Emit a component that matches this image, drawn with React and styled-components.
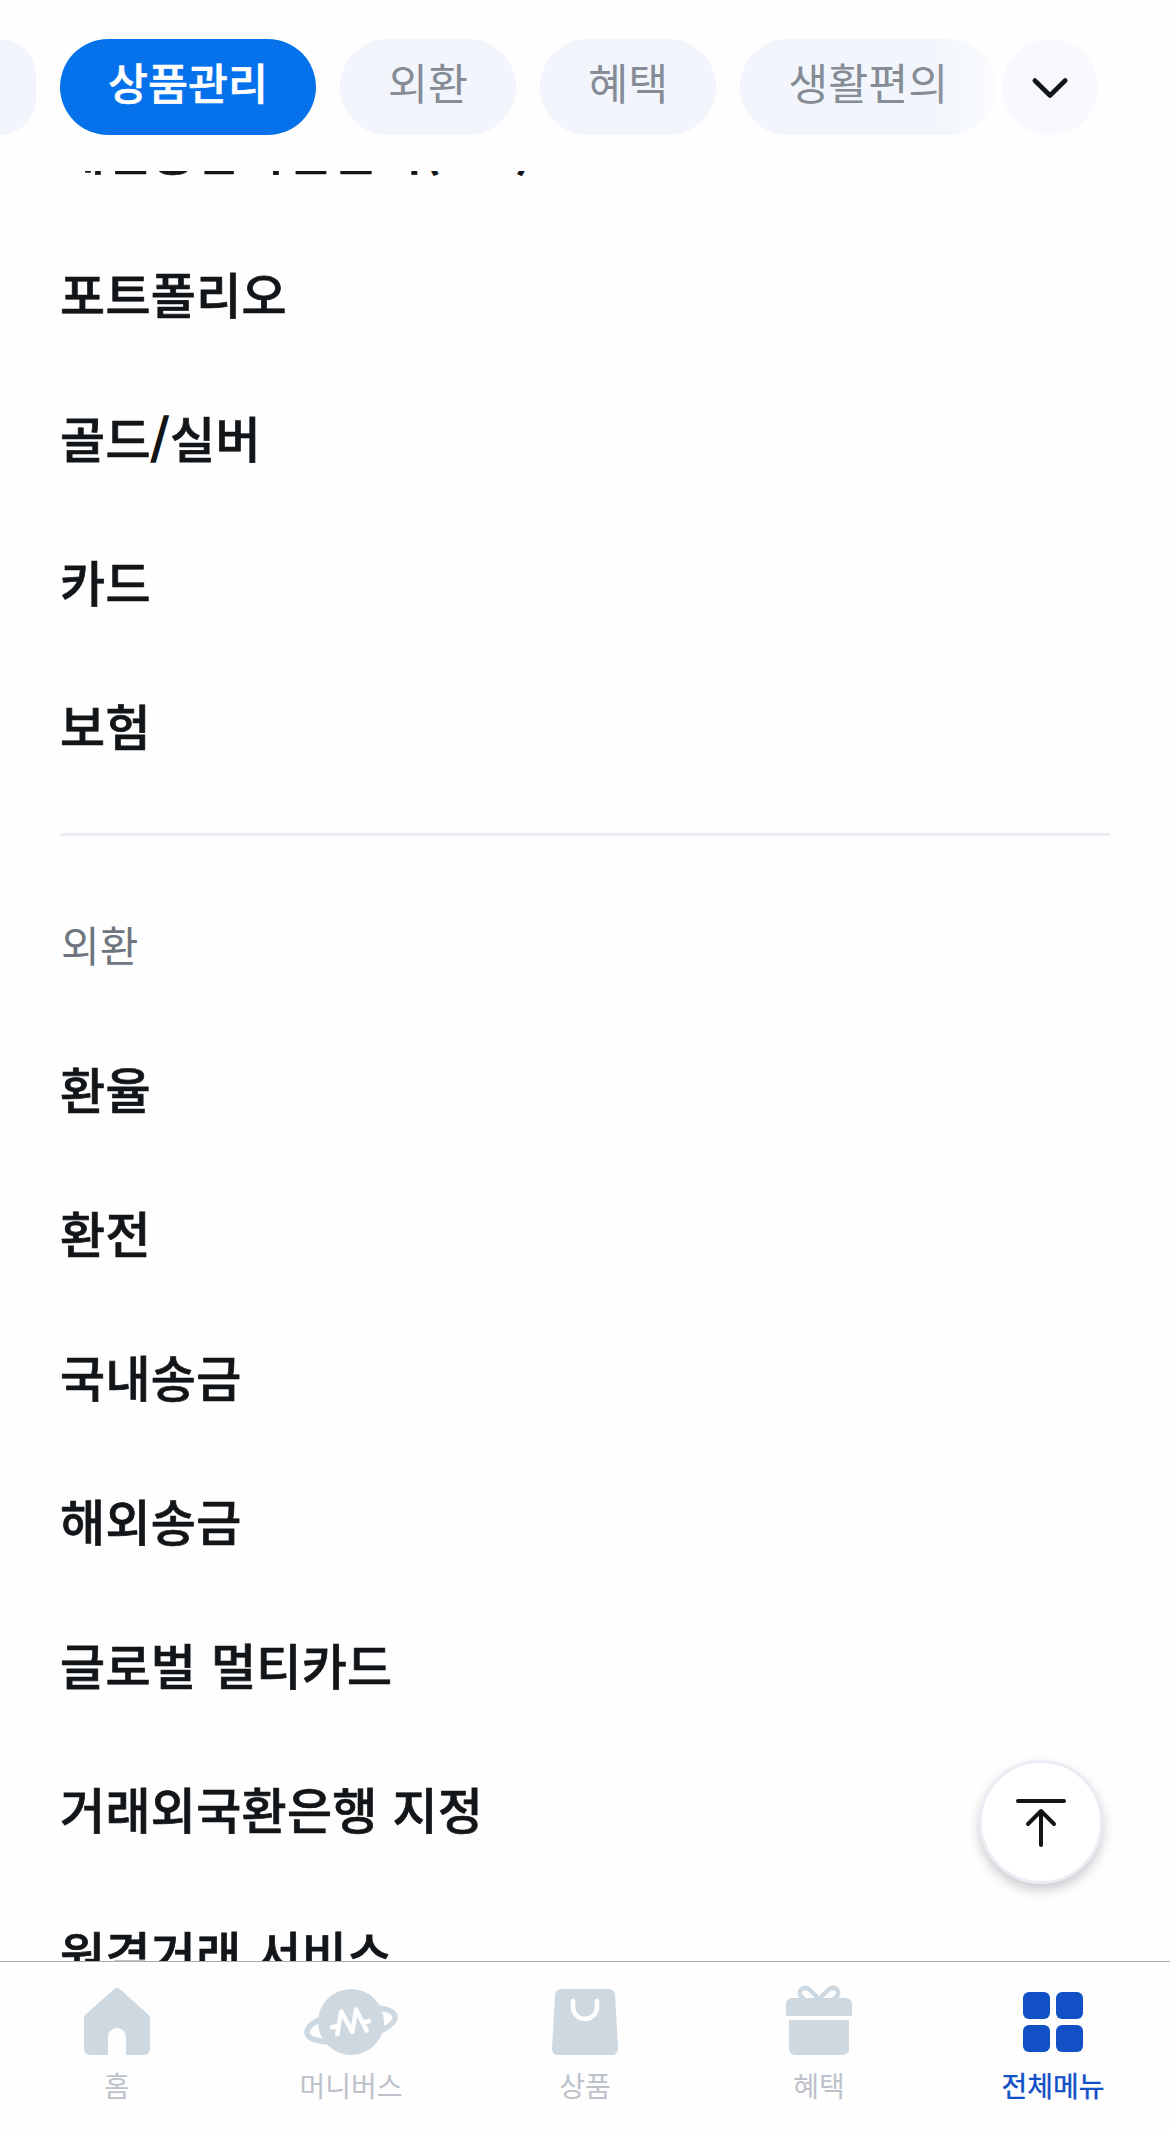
import React from "react";
import styled, { createGlobalStyle } from "styled-components";

const GlobalStyle = createGlobalStyle`
  * {
    box-sizing: border-box;
  }

  body {
    margin: 0;
    background: #fefefe;
    font-family: "Noto Sans CJK KR", "Noto Sans", sans-serif;
  }

  button {
    font-family: inherit;
    border: none;
    padding: 0;
    cursor: pointer;
  }
`;

const tabs = [
  { name: "상품관리", active: true },
  { name: "외환" },
  { name: "혜택" },
  { name: "생활편의" },
];

const productMenu = ["개인종합자산관리(ISA)", "포트폴리오", "골드/실버", "카드", "보험"];

const exchangeMenu = [
  "환율",
  "환전",
  "국내송금",
  "해외송금",
  "글로벌 멀티카드",
  "거래외국환은행 지정",
  "원격거래 서비스",
];

const HomeIcon = () => (
  <svg width="96" height="72" viewBox="0 0 96 72" fill="currentColor">
    <path d="M44.600 3.400a5 5 0 0 1 6.800 0L79 28.200c1.300 1.300 2 2.600 2 4.300V63a6 6 0 0 1-6 6H57V51a9 9 0 0 0-18 0v18H21a6 6 0 0 1-6-6V32.500c0-1.700.7-3 2-4.300z" />
  </svg>
);

const PlanetIcon = () => (
  <svg width="96" height="72" viewBox="0 0 96 72" fill="none">
    <ellipse
      cx="48"
      cy="38.800"
      rx="44.800"
      ry="15"
      stroke="currentColor"
      strokeWidth="5.500"
      transform="rotate(-11 48 38.800)"
    />
    <circle cx="48" cy="36" r="33" fill="currentColor" />
    <path
      d="M29 41.300l6-1.500M34.300 48L38.300 25.500 49.300 46 53 23.500 63.700 44.500M59.700 37l6.300-2"
      stroke="#fefefe"
      strokeWidth="4.500"
      strokeLinecap="round"
      strokeLinejoin="round"
    />
  </svg>
);

const BagIcon = () => (
  <svg width="96" height="72" viewBox="0 0 96 72" fill="none">
    <path
      d="M24 3h48a6 6 0 0 1 6 5.800L81 62.700A6 6 0 0 1 75 69H21a6 6 0 0 1-6-6.300L18 8.800A6 6 0 0 1 24 3z"
      fill="currentColor"
    />
    <path d="M36 15v6a12 12 0 0 0 24 0v-6" stroke="#fefefe" strokeWidth="4.500" strokeLinecap="round" />
  </svg>
);

const GiftIcon = () => (
  <svg width="96" height="72" viewBox="0 0 96 72" fill="currentColor">
    <path d="M15 30V18a6 6 0 0 1 6-6h54a6 6 0 0 1 6 6v12zM18 34h60v29a6 6 0 0 1-6 6H24a6 6 0 0 1-6-6z" />
    <path
      d="M48 13L38.500 3.700C32-1 26.500 5 29.500 9.500L33 13M48 13L57.500 3.700C64-1 69.500 5 66.500 9.500L63 13"
      fill="none"
      stroke="currentColor"
      strokeWidth="4.500"
    />
  </svg>
);

const GridIcon = () => (
  <svg width="96" height="72" viewBox="0 0 96 72" fill="currentColor">
    <rect x="18" y="6" width="27" height="27" rx="6" />
    <rect x="51" y="6" width="27" height="27" rx="6" />
    <rect x="18" y="39" width="27" height="27" rx="6" />
    <rect x="51" y="39" width="27" height="27" rx="6" />
  </svg>
);

const navItems = [
  { name: "홈", Icon: HomeIcon },
  { name: "머니버스", Icon: PlanetIcon },
  { name: "상품", Icon: BagIcon },
  { name: "혜택", Icon: GiftIcon },
  { name: "전체메뉴", Icon: GridIcon, active: true },
];

// Latin letters and marks sit a little higher than the hangul
const withLatin = (text) =>
  text
    .split(/([A-Z()/]+)/)
    .filter(Boolean)
    .map((part, i) => (/[A-Z()/]/.test(part) ? <Latin key={i}>{part}</Latin> : part));

function App() {
  return (
    <Screen>
      <GlobalStyle />
      <TabBar>
        <TabScroller>
          <PreviousTab />
          {tabs.map((tab) => (
            <Tab key={tab.name} $active={tab.active}>
              {tab.name}
            </Tab>
          ))}
          <TabFade />
        </TabScroller>
        <ExpandButton aria-label="펼치기">
          <svg width="42" height="30" viewBox="0 0 42 30" fill="none">
            <path d="M5.800 7.500L21 22.500 36.200 7.500" stroke="#131619" strokeWidth="4.600" strokeLinecap="round" strokeLinejoin="round" />
          </svg>
        </ExpandButton>
      </TabBar>

      <MenuArea>
        <MenuList>
          {productMenu.map((item) => (
            <MenuItem key={item}>{withLatin(item)}</MenuItem>
          ))}
        </MenuList>
        <Divider />
        <SectionTitle>외환</SectionTitle>
        <MenuList>
          {exchangeMenu.map((item) => (
            <MenuItem key={item}>{item}</MenuItem>
          ))}
        </MenuList>
      </MenuArea>

      <BottomNav>
        {navItems.map(({ name, Icon, active }) => (
          <NavItem key={name} $active={active}>
            <Icon />
            <NavLabel $active={active}>{name}</NavLabel>
          </NavItem>
        ))}
      </BottomNav>

      <TopButton aria-label="맨 위로">
        <svg width="60" height="60" viewBox="0 0 60 60" fill="none">
          <path
            d="M7 9h46M30 53V19M17 32L30 19 43 32"
            stroke="#131619"
            strokeWidth="4"
            strokeLinecap="round"
            strokeLinejoin="round"
          />
        </svg>
      </TopButton>
    </Screen>
  );
}

const Screen = styled.div`
  position: relative;
  display: flex;
  flex-direction: column;
  width: 1170px;
  height: 2133px;
  overflow: hidden;
  background: #fefefe;
`;

const TabBar = styled.header`
  display: flex;
  flex: none;
  align-items: flex-start;
  height: 171px;
  padding-top: 39px;
`;

const TabScroller = styled.div`
  position: relative;
  display: flex;
  gap: 24px;
  width: 1002px;
  overflow: hidden;
`;

const Tab = styled.button`
  flex: none;
  height: 96px;
  padding: 0 48px 10px;
  border-radius: 48px;
  background: ${(props) => (props.$active ? "#0571ea" : "#f2f6fc")};
  color: ${(props) => (props.$active ? "#ffffff" : "#868c96")};
  font-size: 43.500px;
  font-weight: ${(props) => (props.$active ? 500 : 400)};
  -webkit-text-stroke: ${(props) => (props.$active ? "0.5px" : "0")};
  line-height: 60px;
  white-space: nowrap;
`;

const PreviousTab = styled.div`
  flex: none;
  width: 36px;
  height: 96px;
  border-radius: 0 48px 48px 0;
  background: #f2f6fc;
`;

/* hints that more tabs follow on the right */
const TabFade = styled.div`
  position: absolute;
  top: 0;
  right: 0;
  width: 68px;
  height: 96px;
  background: linear-gradient(to right, rgba(254, 254, 254, 0), rgba(254, 254, 254, 0.7));
`;

const ExpandButton = styled.button`
  display: flex;
  align-items: center;
  justify-content: center;
  width: 96px;
  height: 96px;
  padding-top: 2px;
  border-radius: 50%;
  background: #f7f9fe;
`;

const MenuArea = styled.main`
  flex: 1;
  min-height: 0;
  padding: 0 60px;
  overflow: hidden;

  & > ul:first-child {
    margin-top: -92px;
  }
`;

const MenuList = styled.ul`
  margin: 0;
  padding: 0;
  list-style: none;
`;

const MenuItem = styled.li`
  height: 144px;
  color: #131619;
  font-size: 49px;
  font-weight: 500;
  -webkit-text-stroke: 0.7px;
  letter-spacing: 0.3px;
  word-spacing: 3.500px;
  line-height: 140px;
  white-space: nowrap;
`;

const Latin = styled.span`
  position: relative;
  top: -4px;
  font-size: 47px;
  line-height: 1;
  letter-spacing: 1px;
  -webkit-text-stroke: 1.600px;
`;

const Divider = styled.hr`
  height: 3px;
  margin: 34px 0 0;
  border: none;
  background: #ecedf4;
`;

const SectionTitle = styled.h2`
  height: 182px;
  margin: 0;
  padding: 76px 0 0 1px;
  color: #6f757e;
  font-size: 42px;
  font-weight: 400;
  line-height: 64px;
`;

const BottomNav = styled.nav`
  display: grid;
  grid-template-columns: repeat(5, 1fr);
  flex: none;
  height: 172px;
  border-top: 1px solid #a9abae;
  background: #fefefe;
`;

const NavItem = styled.a`
  display: flex;
  flex-direction: column;
  align-items: center;
  padding-top: 24px;
  color: ${(props) => (props.$active ? "#1250c6" : "#ced8e1")};

  svg {
    overflow: visible;
  }
`;

const NavLabel = styled.span`
  margin-top: 7px;
  color: ${(props) => (props.$active ? "#1250c6" : "#bdc2ca")};
  font-size: 28px;
  font-weight: 400;
  -webkit-text-stroke: ${(props) => (props.$active ? "0.4px" : "0")};
  line-height: 40px;
`;

const TopButton = styled.button`
  position: absolute;
  right: 67px;
  bottom: 249px;
  display: flex;
  align-items: center;
  justify-content: center;
  width: 124px;
  height: 124px;
  border: 3px solid #ecedf4;
  border-radius: 50%;
  background: #ffffff;
  box-shadow: 0 6px 12px rgba(20, 22, 35, 0.22);
`;

export default App;
